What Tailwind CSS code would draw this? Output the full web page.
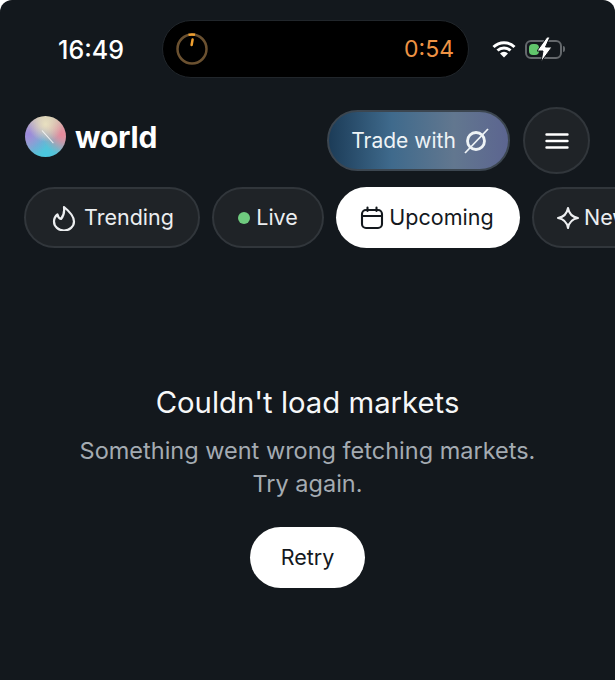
<!DOCTYPE html>
<html lang="en">
<head>
    <meta charset="UTF-8">
    <meta name="viewport" content="width=device-width, initial-scale=1.0">
    <title>world</title>
    <script src="https://cdn.jsdelivr.net/npm/@tailwindcss/browser@4"></script>
</head>
<body class="bg-white">
    <main class="h-[680px] w-[615px] overflow-hidden rounded-t-[12px] bg-[#13181d] font-['Inter',sans-serif] text-white">
        <!-- Status bar -->
        <div class="flex h-[107px] pt-[20px]">
            <div class="flex h-[60px] w-[162px] items-center justify-center pl-[20px] text-[25px] font-medium leading-none">16:49</div>
            <div class="flex h-[58px] w-[307px] items-center justify-between rounded-full border border-[#21262b] bg-black pl-[12px] pr-[14px]">
                <svg width="34" height="34" viewBox="0 0 34 34" fill="none">
                    <circle cx="17" cy="17" r="14.5" stroke="#6b5130" stroke-width="2.5"/>
                    <path d="M13.5 2.900A14.500 14.500 0 0 1 20 2.800" stroke="#f0a030" stroke-width="2.500"/>
                    <path d="M17.600 7.500L16.600 13" stroke="#f0a030" stroke-width="2.500" stroke-linecap="round"/>
                </svg>
                <span class="text-[23px] leading-none text-[#ee9344]">0:54</span>
            </div>
            <div class="flex h-[58px] items-center pl-[23px]">
                <svg width="24" height="18" viewBox="0 0 24 18" fill="none" stroke="#fff" stroke-width="3">
                    <path d="M1.500 7A15 15 0 0 1 22.500 7"/>
                    <path d="M5.500 10.500A9.500 9.500 0 0 1 18.500 10.500"/>
                    <path d="M12 17.500L8 13.500A5.500 5.500 0 0 1 16 13.500Z" fill="#fff" stroke="none"/>
                </svg>
                <div class="relative ml-[9px] h-[19px] w-[37px] rounded-[6px] border-2 border-[#64686c] p-[2px]">
                    <div class="h-full w-[10px] rounded-[4px] bg-[#61c66c]"></div>
                    <svg class="absolute left-[10px] top-[-5px]" width="16" height="25" viewBox="0 0 16 25">
                        <path d="M10 0L0 14H6L4 25L15 10H8.500L13 0Z" fill="#fff" stroke="#13181d" stroke-width="1"/>
                    </svg>
                </div>
                <div class="ml-[1px] h-[6px] w-[2px] rounded-r-full bg-[#64686c]"></div>
            </div>
        </div>

        <!-- Header -->
        <header class="flex h-[67px] items-center pl-[25px] pr-[25px]">
            <div class="mb-[8px] flex items-center">
                <div class="relative h-[41px] w-[41px] overflow-hidden rounded-full bg-[radial-gradient(circle_at_50%_20%,#e8e0c0_0%,transparent_45%),radial-gradient(circle_at_90%_45%,#e8889a_0%,transparent_45%),radial-gradient(circle_at_8%_45%,#9a88dc_0%,transparent_50%),radial-gradient(circle_at_50%_95%,#48c8e0_0%,#5cc0d4_30%,transparent_65%),linear-gradient(#d0c4b0,#b0a8c0)] blur-[0.5px]">
                    <div class="absolute left-[17px] top-[14px] h-[1px] w-[17px] origin-left rotate-[48deg] bg-white/80"></div>
                </div>
                <span class="ml-[9px] text-[30px] font-bold leading-none tracking-[-0.2px]">world</span>
            </div>
            <button class="ml-auto flex h-[61px] w-[183px] items-center justify-center gap-[7px] rounded-full border-2 border-[#3c4650] bg-[linear-gradient(90deg,#1c3c58_0%,#3f6a8c_35%,#62778f_70%,#5c6590_100%)] pl-[3px] text-[21px] text-[#eef3f6]">
                Trade with
                <svg width="26" height="26" viewBox="0 0 26 26" fill="none" stroke="#eef3f6" stroke-width="2.800">
                    <circle cx="13" cy="13" r="8.500"/>
                    <path d="M2 25L25 1" stroke-width="1.800"/>
                </svg>
            </button>
            <button class="ml-[13px] flex h-[67px] w-[67px] items-center justify-center rounded-full border-2 border-[#31363b] bg-[#1f2327]">
                <svg width="24" height="16" viewBox="0 0 24 16" fill="none" stroke="#fff" stroke-width="2.400" stroke-linecap="round">
                    <path d="M1.500 1.500H22.500M1.500 8H22.500M1.500 14.500H22.500"/>
                </svg>
            </button>
        </header>

        <!-- Filter pills -->
        <nav class="mt-[13px] flex gap-[12px] pl-[24px] text-[21.5px] leading-none">
            <button class="flex h-[61px] w-[176px] shrink-0 items-center justify-center gap-[8px] rounded-full border-2 border-[#31363b] bg-[#1f2327] pl-[2px] text-[#eceef0]">
                <svg width="24" height="26" viewBox="0 0 24 26" fill="none" stroke="#eceef0" stroke-width="2.200" stroke-linejoin="round">
                    <path d="M12 2C17 6 22 11 22 16.500A10 9 0 0 1 2 16.500C2 13 3.500 11 5.500 9.500C6 12 7 13.500 9 14C11.500 11 12.500 6 12 2Z"/>
                </svg>
                Trending
            </button>
            <button class="flex h-[61px] w-[112px] shrink-0 items-center justify-center gap-[6px] rounded-full border-2 border-[#31363b] bg-[#1f2327] text-[#eceef0]">
                <span class="h-[12px] w-[12px] rounded-full bg-[#6fcb7f]"></span>
                Live
            </button>
            <button class="flex h-[61px] w-[184px] shrink-0 items-center justify-center gap-[5px] rounded-full bg-white pr-[2px] text-[#13181d]">
                <svg width="24" height="24" viewBox="0 0 24 24" fill="none" stroke="#13181d" stroke-width="2.100" stroke-linecap="round">
                    <rect x="2" y="4" width="20" height="18" rx="4"/>
                    <path d="M2 10H22M7.500 1.500V5M16.500 1.500V5"/>
                </svg>
                Upcoming
            </button>
            <button class="flex h-[61px] w-[176px] shrink-0 items-center gap-[4px] rounded-full border-2 border-[#31363b] bg-[#1f2327] pl-[22px] text-[#eceef0]">
                <svg width="24" height="24" viewBox="0 0 24 24" fill="none" stroke="#eceef0" stroke-width="2.100" stroke-linejoin="round">
                    <path d="M12 2C13 8 16 11 22 12C16 13 13 16 12 22C11 16 8 13 2 12C8 11 11 8 12 2Z"/>
                </svg>
                New
            </button>
        </nav>

        <!-- Error state -->
        <section class="mt-[135px] flex flex-col items-center text-center">
            <h2 class="text-[29.3px] font-normal leading-[40px] text-[#f6f7f8]">Couldn't load markets</h2>
            <p class="mt-[11px] text-[23.5px] leading-[33px] text-[#a4abb2]">Something went wrong fetching markets.<br>Try again.</p>
            <button class="mt-[27px] h-[61px] w-[115px] rounded-full bg-white text-[21.5px] text-[#13181d]">Retry</button>
        </section>
    </main>
</body>
</html>
